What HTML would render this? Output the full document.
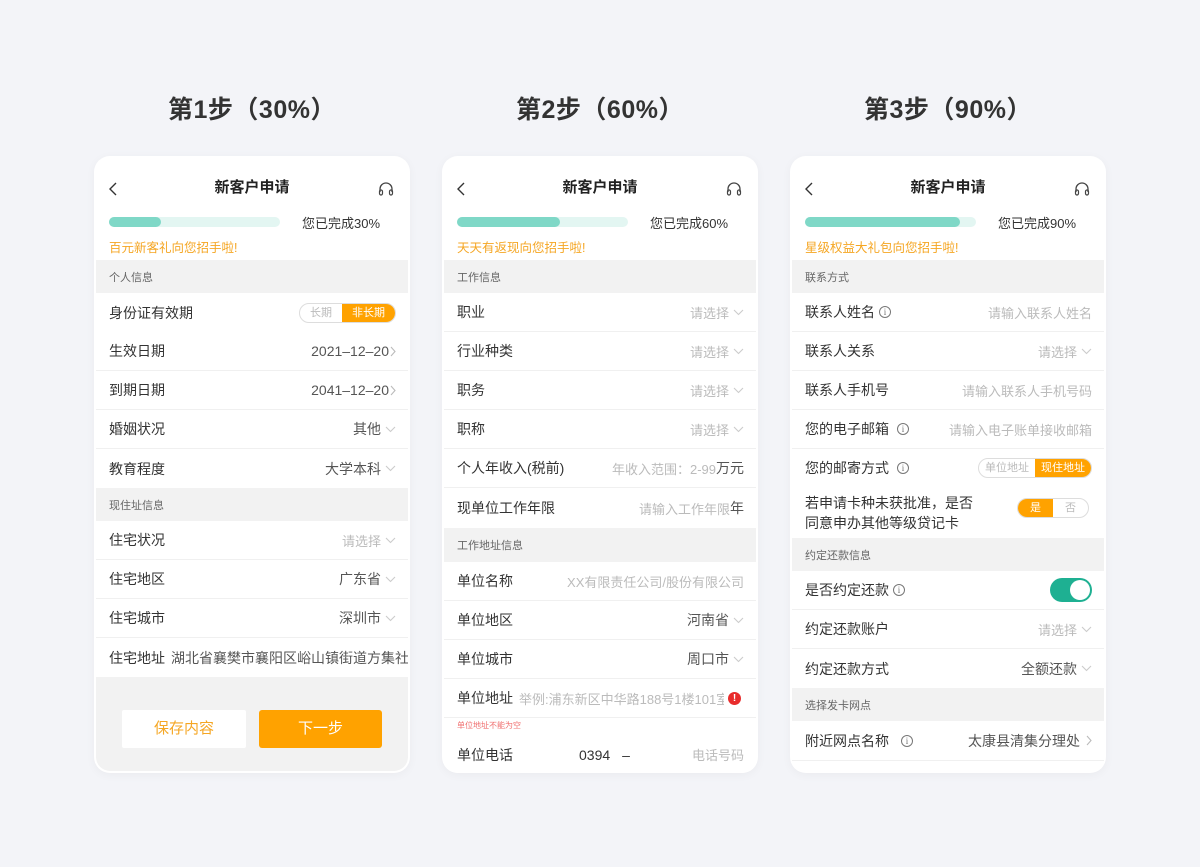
<!DOCTYPE html>
<html><head><meta charset="utf-8">
<style>
*{margin:0;padding:0;box-sizing:border-box}
body{width:1200px;height:867px;background:#f3f4f8;font-family:"Liberation Sans","Noto Sans CJK SC",sans-serif;position:relative;overflow:hidden;color:#333}
.st{position:absolute;top:90px;width:316px;text-align:center;font-size:25px;font-weight:bold;color:#333;letter-spacing:0.5px}
.card{position:absolute;top:156px;width:316px;background:#fff;border-radius:16px;overflow:hidden;box-shadow:0 2px 10px rgba(0,0,0,0.04)}
.hd{position:absolute;top:20px;left:0;right:0;height:24px;text-align:center;font-size:15px;font-weight:bold;line-height:24px;color:#222}
.back{position:absolute;left:15px;top:26px}
.hp{position:absolute;left:283px;top:24px}
.track{position:absolute;left:15px;top:61px;width:171px;height:10px;border-radius:5px;background:#e3f6f2}
.fill{position:absolute;left:0;top:0;height:10px;border-radius:5px;background:#7fd8c7}
.pct{position:absolute;left:208px;top:57px;font-size:13px;color:#333}
.promo{position:absolute;left:15px;top:81px;font-size:12.5px;color:#f5a623}
.sec{position:absolute;left:2px;right:2px;background:#f2f2f2;font-size:11px;color:#666;padding-left:13px;display:flex;align-items:center}
.row{position:absolute;left:2px;right:2px;background:#fff;display:flex;align-items:center;padding:0 12px 0 13px;font-size:14px;color:#333;border-bottom:1px solid #f0f0f0}
.row .v{margin-left:auto;color:#555;display:flex;align-items:center}
.ph{color:#bbb;font-size:13px}
.dn{display:inline-block;margin-left:4px;width:11px;height:7px}
.info{display:inline-block;width:12px;height:12px;border:1px solid #777;border-radius:50%;font-size:9px;line-height:10px;text-align:center;color:#777;margin-left:4px;font-family:"Liberation Serif",serif}
.seg{display:flex;border:1px solid #ddd;border-radius:10px;overflow:hidden;height:20px;font-size:11px;line-height:18px}
.seg span{padding:0 10px;color:#bbb}
.seg .on{background:#ffa200;color:#fff}
</style></head><body>
<div class="st" style="left:94px">第1步（30%）</div>
<div class="st" style="left:442px">第2步（60%）</div>
<div class="st" style="left:790px">第3步（90%）</div>

<svg width="0" height="0" style="position:absolute"><defs>
<symbol id="dn" viewBox="0 0 11 7"><path d="M1 1l4.5 4.5L10 1" fill="none" stroke="#ccc" stroke-width="1.1"/></symbol>
<symbol id="rt" viewBox="0 0 6 11"><path d="M1 1l4 4.5L1 10" fill="none" stroke="#bbb" stroke-width="1.1"/></symbol>
</defs></svg>

<!-- CARD 1 -->
<div class="card" style="left:94px;height:617px;background:#fff">
<svg class="back" width="8" height="14" viewBox="0 0 8 14"><path d="M7 1L1 7l6 6" fill="none" stroke="#333" stroke-width="1.4"/></svg>
<div class="hd">新客户申请</div>
<svg class="hp" width="18" height="18" viewBox="0 0 18 18"><path d="M3 12V9a6 6 0 0112 0v3" fill="none" stroke="#444" stroke-width="1.3"/><rect x="2.5" y="10" width="3" height="5" rx="1.5" fill="none" stroke="#444" stroke-width="1.2"/><rect x="12.5" y="10" width="3" height="5" rx="1.5" fill="none" stroke="#444" stroke-width="1.2"/></svg>
<div class="track"><div class="fill" style="width:52px"></div></div>
<div class="pct">您已完成30%</div>
<div class="promo">百元新客礼向您招手啦!</div>
<div class="sec" style="top:104px;height:33px">个人信息</div>
<div class="row" style="top:137px;height:39px;border:0">身份证有效期<span class="v"><span class="seg"><span>长期</span><span class="on">非长期</span></span></span></div>
<div class="row" style="top:176px;height:39px">生效日期<span class="v">2021–12–20<svg width="6" height="11" style="margin-left:1px"><use href="#rt"/></svg></span></div>
<div class="row" style="top:215px;height:39px">到期日期<span class="v">2041–12–20<svg width="6" height="11" style="margin-left:1px"><use href="#rt"/></svg></span></div>
<div class="row" style="top:254px;height:39px">婚姻状况<span class="v">其他<svg class="dn"><use href="#dn"/></svg></span></div>
<div class="row" style="top:293px;height:39px;border:0">教育程度<span class="v">大学本科<svg class="dn"><use href="#dn"/></svg></span></div>
<div class="sec" style="top:332px;height:33px">现住址信息</div>
<div class="row" style="top:365px;height:39px">住宅状况<span class="v"><span class="ph">请选择</span><svg class="dn"><use href="#dn"/></svg></span></div>
<div class="row" style="top:404px;height:39px">住宅地区<span class="v">广东省<svg class="dn"><use href="#dn"/></svg></span></div>
<div class="row" style="top:443px;height:39px">住宅城市<span class="v">深圳市<svg class="dn"><use href="#dn"/></svg></span></div>
<div class="row" style="top:482px;height:39px;border:0;white-space:nowrap;overflow:hidden">住宅地址<span style="margin-left:6px;color:#555">湖北省襄樊市襄阳区峪山镇街道方集社区</span></div>
<div style="position:absolute;left:2px;right:2px;top:521px;bottom:2px;background:#f2f2f2;border-radius:0 0 14px 14px">
<div style="position:absolute;left:26px;top:33px;width:124px;height:38px;background:#fff;border-radius:2px;color:#f5a623;font-size:15px;text-align:center;line-height:38px">保存内容</div>
<div style="position:absolute;left:163px;top:33px;width:123px;height:38px;background:#ffa200;border-radius:3px;color:#fff;font-size:15px;text-align:center;line-height:38px">下一步</div>
</div>
</div>

<!-- CARD 2 -->
<div class="card" style="left:442px;height:617px">
<svg class="back" width="8" height="14" viewBox="0 0 8 14"><path d="M7 1L1 7l6 6" fill="none" stroke="#333" stroke-width="1.4"/></svg>
<div class="hd">新客户申请</div>
<svg class="hp" width="18" height="18" viewBox="0 0 18 18"><path d="M3 12V9a6 6 0 0112 0v3" fill="none" stroke="#444" stroke-width="1.3"/><rect x="2.5" y="10" width="3" height="5" rx="1.5" fill="none" stroke="#444" stroke-width="1.2"/><rect x="12.5" y="10" width="3" height="5" rx="1.5" fill="none" stroke="#444" stroke-width="1.2"/></svg>
<div class="track"><div class="fill" style="width:103px"></div></div>
<div class="pct">您已完成60%</div>
<div class="promo">天天有返现向您招手啦!</div>
<div class="sec" style="top:104px;height:33px">工作信息</div>
<div class="row" style="top:137px;height:39px">职业<span class="v"><span class="ph">请选择</span><svg class="dn"><use href="#dn"/></svg></span></div>
<div class="row" style="top:176px;height:39px">行业种类<span class="v"><span class="ph">请选择</span><svg class="dn"><use href="#dn"/></svg></span></div>
<div class="row" style="top:215px;height:39px">职务<span class="v"><span class="ph">请选择</span><svg class="dn"><use href="#dn"/></svg></span></div>
<div class="row" style="top:254px;height:39px">职称<span class="v"><span class="ph">请选择</span><svg class="dn"><use href="#dn"/></svg></span></div>
<div class="row" style="top:293px;height:39px">个人年收入(税前)<span class="v"><span class="ph">年收入范围：2-99</span>万元</span></div>
<div class="row" style="top:332px;height:40px;border:0">现单位工作年限<span class="v"><span class="ph">请输入工作年限</span>年</span></div>
<div class="sec" style="top:372px;height:34px">工作地址信息</div>
<div class="row" style="top:406px;height:39px">单位名称<span class="v"><span class="ph">XX有限责任公司/股份有限公司</span></span></div>
<div class="row" style="top:445px;height:39px">单位地区<span class="v">河南省<svg class="dn"><use href="#dn"/></svg></span></div>
<div class="row" style="top:484px;height:39px">单位城市<span class="v">周口市<svg class="dn"><use href="#dn"/></svg></span></div>
<div class="row" style="top:523px;height:39px;white-space:nowrap">单位地址<span class="ph" style="margin-left:6px;overflow:hidden;width:205px">举例:浦东新区中华路188号1楼101室</span><span style="position:absolute;right:15px;top:13px;width:13px;height:13px;border-radius:50%;background:#e82c2c;color:#fff;font-size:10px;font-weight:bold;text-align:center;line-height:13px">!</span></div>
<div style="position:absolute;left:15px;top:564px;font-size:8px;color:#f07070">单位地址不能为空</div>
<div class="row" style="top:580px;height:37px;border:0">单位电话<span style="margin-left:66px">0394</span><span style="margin-left:12px">–</span><span class="v"><span class="ph">电话号码</span></span></div>
</div>

<!-- CARD 3 -->
<div class="card" style="left:790px;height:617px">
<svg class="back" width="8" height="14" viewBox="0 0 8 14"><path d="M7 1L1 7l6 6" fill="none" stroke="#333" stroke-width="1.4"/></svg>
<div class="hd">新客户申请</div>
<svg class="hp" width="18" height="18" viewBox="0 0 18 18"><path d="M3 12V9a6 6 0 0112 0v3" fill="none" stroke="#444" stroke-width="1.3"/><rect x="2.5" y="10" width="3" height="5" rx="1.5" fill="none" stroke="#444" stroke-width="1.2"/><rect x="12.5" y="10" width="3" height="5" rx="1.5" fill="none" stroke="#444" stroke-width="1.2"/></svg>
<div class="track"><div class="fill" style="width:155px"></div></div>
<div class="pct">您已完成90%</div>
<div class="promo">星级权益大礼包向您招手啦!</div>
<div class="sec" style="top:104px;height:33px">联系方式</div>
<div class="row" style="top:137px;height:39px">联系人姓名<span class="info">i</span><span class="v"><span class="ph">请输入联系人姓名</span></span></div>
<div class="row" style="top:176px;height:39px">联系人关系<span class="v"><span class="ph">请选择</span><svg class="dn"><use href="#dn"/></svg></span></div>
<div class="row" style="top:215px;height:39px">联系人手机号<span class="v"><span class="ph">请输入联系人手机号码</span></span></div>
<div class="row" style="top:254px;height:39px">您的电子邮箱<span class="info" style="margin-left:8px">i</span><span class="v"><span class="ph">请输入电子账单接收邮箱</span></span></div>
<div class="row" style="top:293px;height:38px;border:0">您的邮寄方式<span class="info" style="margin-left:8px">i</span><span class="v"><span class="seg"><span style="padding:0 6px">单位地址</span><span class="on" style="padding:0 6px">现住地址</span></span></span></div>
<div class="row" style="top:331px;height:51px;border:0;line-height:20px">若申请卡种未获批准，是否<br>同意申办其他等级贷记卡<span class="v" style="position:absolute;right:15px;top:11px"><span class="seg" style="border-color:#ddd"><span class="on" style="padding:0 12px">是</span><span style="padding:0 12px">否</span></span></span></div>
<div class="sec" style="top:382px;height:33px">约定还款信息</div>
<div class="row" style="top:415px;height:39px">是否约定还款<span class="info">i</span><span class="v"><span style="display:inline-block;width:42px;height:24px;border-radius:12px;background:#1eb092;position:relative"><span style="position:absolute;right:2px;top:2px;width:20px;height:20px;border-radius:50%;background:#fff"></span></span></span></div>
<div class="row" style="top:454px;height:39px">约定还款账户<span class="v"><span class="ph">请选择</span><svg class="dn"><use href="#dn"/></svg></span></div>
<div class="row" style="top:493px;height:39px;border:0">约定还款方式<span class="v">全额还款<svg class="dn"><use href="#dn"/></svg></span></div>
<div class="sec" style="top:532px;height:33px">选择发卡网点</div>
<div class="row" style="top:565px;height:40px">附近网点名称<span class="info" style="margin-left:12px">i</span><span class="v">太康县清集分理处<svg width="6" height="11" style="margin-left:6px"><use href="#rt"/></svg></span></div>
</div>
</body></html>
